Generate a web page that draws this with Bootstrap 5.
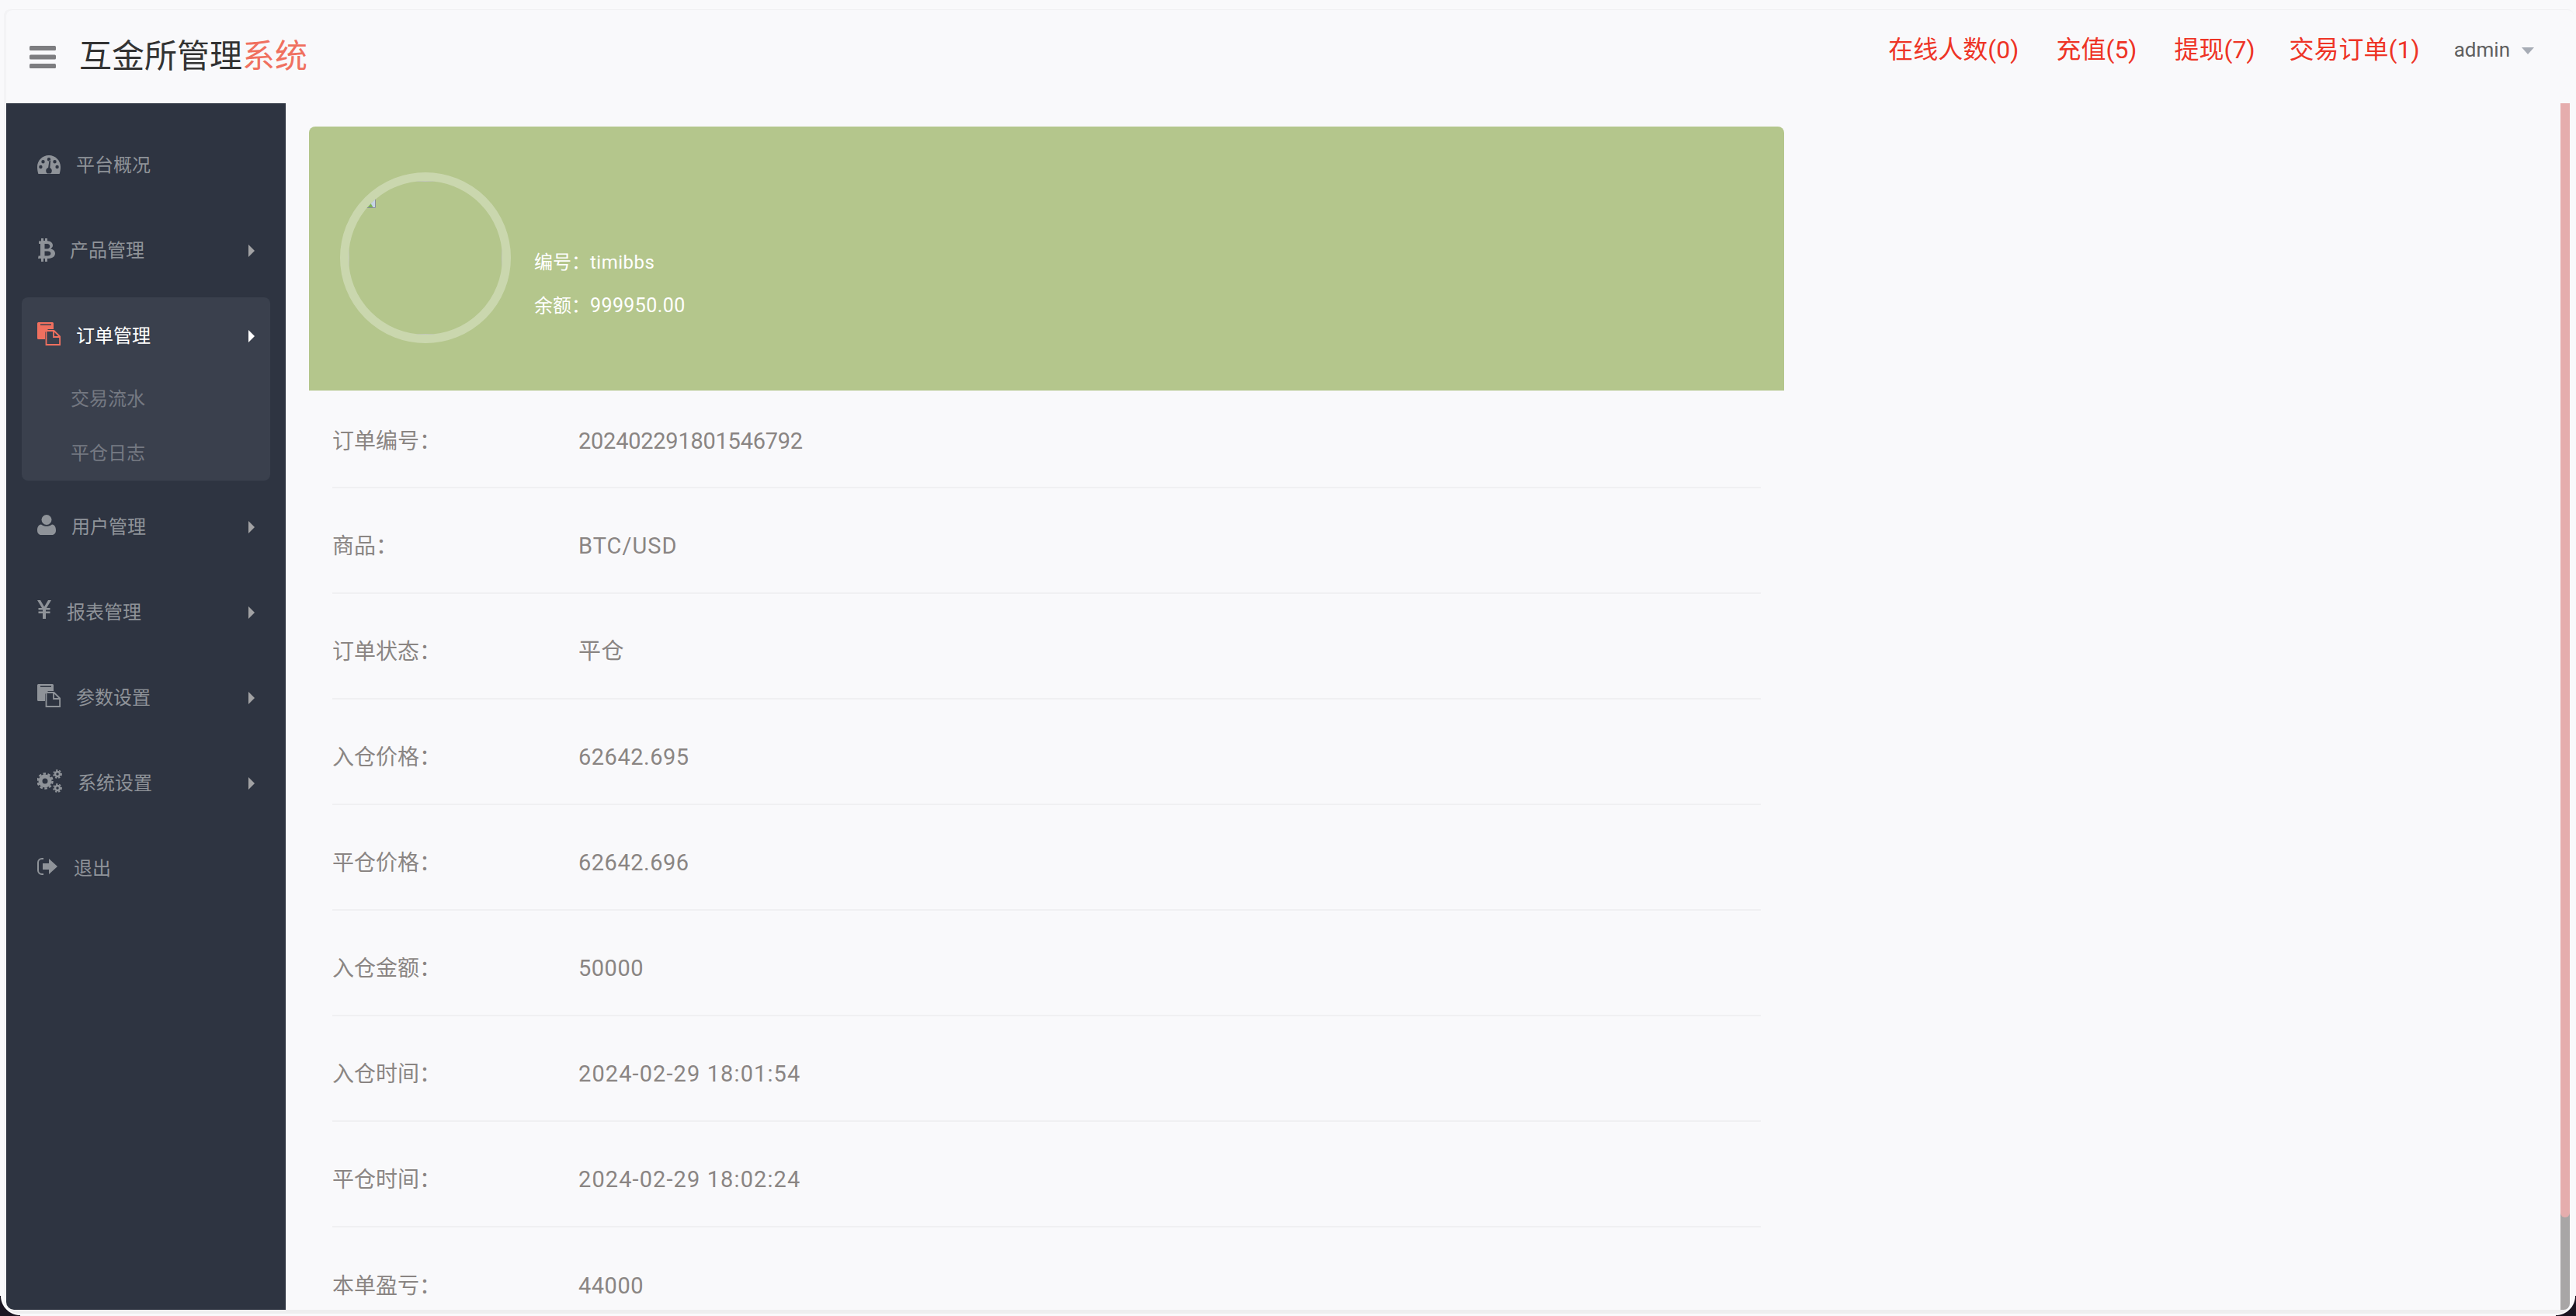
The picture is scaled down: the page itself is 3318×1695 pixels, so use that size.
<!DOCTYPE html>
<html lang="zh">
<head>
<meta charset="utf-8">
<title>互金所管理系统</title>
<link href="https://cdn.jsdelivr.net/npm/bootstrap@5.3.0/dist/css/bootstrap.min.css" rel="stylesheet">
<style>
html,body{height:100%;}
body{background:#f9f9fb;overflow:hidden;font-family:Roboto,"Noto Sans CJK SC",sans-serif;font-weight:400;color:#8a8583;}
.app-frame{height:1695px;padding:12px 3px 8px 8px;position:relative;}
.app-win{height:100%;border-top:1px solid #f0f0f2;box-shadow:-3px 0 0 #f3f3f5;border-radius:8px 8px 0 0;}
.top-bar{height:120px;padding:0 51px 0 30px;}
.burger{width:34px;height:29px;margin-right:30px;}
.brand-txt{font-size:42px;color:#333;font-weight:400;line-height:1;}
.brand-txt em{font-style:normal;color:#f0705f;}
.top-links{margin-top:-18px;}
.top-links a{font-size:32px;color:#ee3426;text-decoration:none;margin-right:48px;font-weight:400;}
.top-links a:nth-child(3){margin-right:44px;}
.top-links a:nth-child(4){margin-right:44px;}
.user-drop{font-size:26px;color:#606060;}
.user-drop i{display:inline-block;border:8px solid transparent;border-top:9px solid #a7acb5;border-bottom:0;margin-left:15px;vertical-align:middle;}
.side-bar{width:360px;background:#2e3441;flex:none;padding-top:24px;border-bottom-left-radius:10px;}
.menu-row{height:110px;padding:2px 40px 0;font-size:24px;color:#8f9399;}
.menu-row svg.mi{flex:none;fill:currentColor;}
.menu-row .tri{margin-left:auto;width:0;height:0;border-left:8px solid #a2a2a4;border-top:8px solid transparent;border-bottom:8px solid transparent;}
.menu-open{margin:6px 20px 4px;background:#3a404d;border-radius:8px;height:236px;}
.menu-open .menu-row{padding-left:20px;padding-right:20px;color:#fff;height:98px;}
.menu-open .menu-row svg.mi{color:#f0705f;}
.menu-open .menu-row .tri{border-left-color:#fff;}
.sub-row{height:70px;padding:2px 0 0 63px;font-size:24px;color:#757982;}
.sub-first{margin-top:-3px;}
.work-area{min-width:0;overflow:hidden;padding:30px 0 0 30px;}
.panel-box{width:1900px;}
.hero-box{height:340px;background:#b4c68c;border-radius:8px 8px 0 0;padding-left:40px;}
.ring-box{width:220px;height:220px;border:11px solid rgba(255,255,255,.3);border-radius:50%;position:relative;flex:none;margin-top:-2px;overflow:hidden;}
.ring-pic{width:100%;height:100%;border:1px solid #c4c8bc;}
.ring-box svg{position:absolute;left:19px;top:19px;}
.hero-info{color:#fff;font-size:24px;margin-left:30px;margin-top:66px;line-height:55px;letter-spacing:.5px;}
.hero-info span{letter-spacing:0;}
.hero-info .sum-val{font-size:25px;letter-spacing:.4px;}
.data-row{height:136px;margin:0 30px;border-bottom:2px solid #f0f0f2;font-size:28px;padding-top:15px;}
.data-row>b{font-weight:400;width:317px;flex:none;}
.data-row>span{font-size:29px;letter-spacing:.5px;}
.data-row>span.long-val{letter-spacing:-.25px;}
.data-row>span.code-val{letter-spacing:1px;}
.data-row>span.wide-val{letter-spacing:1.1px;}
.first-row{height:126px;padding-top:7px;}
.data-row:last-child{border:0;}
.scroll-rail{width:12px;background:#a8a6a6;flex:none;margin-right:5px;border-bottom-right-radius:8px;}
.scroll-thumb{height:1435px;background:#e5adad;border-radius:0 0 6px 6px;}
.base-line{height:5px;background:#eeeeef;}
.corner-l,.corner-r{position:absolute;bottom:0;width:26px;height:26px;}
.corner-l{left:0;background:radial-gradient(circle 26px at 100% 0,transparent 23px,#fff 23.5px,#fff 24.5px,#1b1622 25.5px);}
.corner-r{right:0;background:radial-gradient(circle 26px at 0 0,transparent 23px,#fff 23.5px,#fff 24.5px,#1b1622 25.5px);}
</style>
</head>
<body>
<div class="app-frame">
  <div class="app-win d-flex flex-column">
    <div class="top-bar d-flex align-items-center flex-shrink-0">
      <svg class="burger" viewBox="0 0 34 29"><g fill="#7d7d80"><rect width="34" height="6" rx="1.5"/><rect y="11.500" width="34" height="6" rx="1.5"/><rect y="23" width="34" height="6" rx="1.5"/></g></svg>
      <div class="brand-txt">互金所管理<em>系统</em></div>
      <div class="top-links d-flex align-items-center ms-auto">
        <a href="#">在线人数(0)</a><a href="#">充值(5)</a><a href="#">提现(7)</a><a href="#">交易订单(1)</a>
        <div class="user-drop">admin<i></i></div>
      </div>
    </div>
    <div class="d-flex flex-grow-1" style="min-height:0">
      <nav class="side-bar">
        <div class="menu-row d-flex align-items-center">
          <svg class="mi" width="30" height="24" viewBox="0 0 30 24" style="margin-right:20px;margin-top:-2px"><path fill-rule="evenodd" d="M15 0C6.700 0 0 6.700 0 15c0 3.300.6 6.500 1.400 9h27.200c.8-2.500 1.400-5.700 1.400-9C30 6.700 23.300 0 15 0zM15 3a2.200 2.200 0 1 1 0 4.400A2.200 2.200 0 0 1 15 3zM7.500 6a2.200 2.200 0 1 1 0 4.400A2.200 2.200 0 0 1 7.500 6zm15 0a2.200 2.200 0 1 1 0 4.400 2.200 2.200 0 0 1 0-4.400zM4.400 12.800a2.200 2.200 0 1 1 0 4.400 2.200 2.200 0 0 1 0-4.400zm21.200 0a2.200 2.200 0 1 1 0 4.400 2.200 2.200 0 0 1 0-4.400zM17.200 6.500l-.9 9.800c1.600.6 2.500 2 2.500 3.600 0 1.500-.8 3-2 3.700h-3.600c-1.200-.7-2-2.200-2-3.700 0-1.800 1.200-3.300 2.900-3.800l1.500-9.800z"/></svg>
          <span>平台概况</span>
        </div>
        <div class="menu-row d-flex align-items-center">
          <svg class="mi" width="22" height="30" viewBox="0 0 22 30" style="margin-right:19px;margin-left:1px;margin-top:-2px"><path fill-rule="evenodd" d="M4 0h3v3h2V0h3v3.200c4 .4 7 2.400 7 5.800 0 2-1.200 3.500-2.900 4.400C19.600 14.200 22 16 22 19.300c0 4.300-3.500 6.400-8 6.600h-2V30H9v-4H7v4H4v-4H0l.6-3.500H3V7H1V3.600h3zM8.500 7v6.500h3.300c2.200 0 3.500-1.200 3.500-3.200S14 7 11.800 7zm0 9.500V22.500h4c2.400 0 3.900-1.100 3.900-3s-1.500-3-3.900-3z"/></svg>
          <span>产品管理</span><i class="tri"></i>
        </div>
        <div class="menu-open">
          <div class="menu-row d-flex align-items-center">
            <svg class="mi" width="30" height="30" viewBox="0 0 30 30" style="margin-right:20px;margin-top:-6px"><path fill-rule="evenodd" d="M1.500 0h18A1.500 1.500 0 0 1 21 1.500V9h-7l-4 4v9H1.500A1.500 1.500 0 0 1 0 20.500v-19A1.500 1.500 0 0 1 1.500 0zM4 2.500v1.500h14V2.500z"/><path fill="none" stroke="currentColor" stroke-width="1.800" d="M11.500 11h10l7.600 7.500V29H11.500zM21 11v8h8"/></svg>
            <span>订单管理</span><i class="tri"></i>
          </div>
          <div class="sub-row sub-first d-flex align-items-center">交易流水</div>
          <div class="sub-row d-flex align-items-center">平仓日志</div>
        </div>
        <div class="menu-row d-flex align-items-center">
          <svg class="mi" width="24" height="26" viewBox="0 0 24 26" style="margin-right:20px;margin-top:-6px"><circle cx="12" cy="6.500" r="6.500"/><path d="M0 20c0-4 1.500-7 5-7.500 2 1.500 4.500 2.300 7 2.300s5-.8 7-2.300c3.500.5 5 3.500 5 7.500 0 3.500-2 6-5 6H5c-3 0-5-2.500-5-6z"/></svg>
          <span>用户管理</span><i class="tri"></i>
        </div>
        <div class="menu-row d-flex align-items-center">
          <svg class="mi" width="18" height="24" viewBox="0 0 18 24" style="margin-right:20px;margin-top:-8px"><path d="M0 0h4l5 8.500L14 0h4l-6 10h4.500v2.500H11v2h5.500V17H11v7H7v-7H1.500v-2.500H7v-2H1.500V10H6z"/></svg>
          <span>报表管理</span><i class="tri"></i>
        </div>
        <div class="menu-row d-flex align-items-center">
          <svg class="mi" width="30" height="30" viewBox="0 0 30 30" style="margin-right:20px;margin-top:-6px"><path fill-rule="evenodd" d="M1.500 0h18A1.500 1.500 0 0 1 21 1.500V9h-7l-4 4v9H1.500A1.500 1.500 0 0 1 0 20.500v-19A1.500 1.500 0 0 1 1.500 0zM4 2.500v1.500h14V2.500z"/><path fill="none" stroke="currentColor" stroke-width="1.800" d="M11.500 11h10l7.600 7.500V29H11.500zM21 11v8h8"/></svg>
          <span>参数设置</span><i class="tri"></i>
        </div>
        <div class="menu-row d-flex align-items-center">
          <svg class="mi" width="32" height="30" viewBox="0 0 32 30" style="margin-right:20px;margin-top:-6px"><g fill="none" stroke="currentColor"><circle cx="10" cy="15" r="6" stroke-width="5"/><circle cx="10" cy="15" r="9.500" stroke-width="2.500" stroke-dasharray="3.500 2.500"/><circle cx="26" cy="6" r="3" stroke-width="2.500"/><circle cx="26" cy="6" r="5" stroke-width="1.800" stroke-dasharray="2.200 2"/><circle cx="26" cy="24" r="3" stroke-width="2.500"/><circle cx="26" cy="24" r="5" stroke-width="1.800" stroke-dasharray="2.200 2"/></g></svg>
          <span>系统设置</span><i class="tri"></i>
        </div>
        <div class="menu-row d-flex align-items-center">
          <svg class="mi" width="26" height="22" viewBox="0 0 26 22" style="margin-right:21px;margin-top:-6px"><path d="M7 0h1v2H6a4 4 0 0 0-4 4v10a4 4 0 0 0 4 4h2v2H6a6 6 0 0 1-6-6V6a6 6 0 0 1 6-6z"/><path d="M15 1l11 10-11 10v-6H7V7h8z"/></svg>
          <span>退出</span>
        </div>
      </nav>
      <main class="work-area flex-grow-1">
        <div class="panel-box">
          <div class="hero-box d-flex align-items-center">
            <div class="ring-box">
              <div class="ring-pic"></div>
              <svg width="16" height="16" viewBox="0 0 16 16"><rect width="16" height="16" fill="#c6d4e6"/><path d="M3 16l6-7 4 7z" fill="#7db356"/><path d="M.5.500h15v15H.5z" fill="none" stroke="#8b8f9a"/></svg>
            </div>
            <div class="hero-info">
              <div><span>编号：</span>timibbs</div>
              <div><span>余额：</span><b class="sum-val fw-normal">999950.00</b></div>
            </div>
          </div>
          <div class="data-row first-row d-flex align-items-center"><b>订单编号：</b><span class="long-val">202402291801546792</span></div>
          <div class="data-row d-flex align-items-center"><b>商品：</b><span class="code-val">BTC/USD</span></div>
          <div class="data-row d-flex align-items-center"><b>订单状态：</b><span>平仓</span></div>
          <div class="data-row d-flex align-items-center"><b>入仓价格：</b><span>62642.695</span></div>
          <div class="data-row d-flex align-items-center"><b>平仓价格：</b><span>62642.696</span></div>
          <div class="data-row d-flex align-items-center"><b>入仓金额：</b><span>50000</span></div>
          <div class="data-row d-flex align-items-center"><b>入仓时间：</b><span class="wide-val">2024-02-29 18:01:54</span></div>
          <div class="data-row d-flex align-items-center"><b>平仓时间：</b><span class="wide-val">2024-02-29 18:02:24</span></div>
          <div class="data-row d-flex align-items-center"><b>本单盈亏：</b><span>44000</span></div>
        </div>
      </main>
      <div class="scroll-rail"><div class="scroll-thumb"></div></div>
    </div>
  </div>
  <div class="base-line"></div>
  <div class="corner-l"></div>
  <div class="corner-r"></div>
</div>
<script src="https://cdn.jsdelivr.net/npm/bootstrap@5.3.0/dist/js/bootstrap.bundle.min.js"></script>
</body>
</html>
